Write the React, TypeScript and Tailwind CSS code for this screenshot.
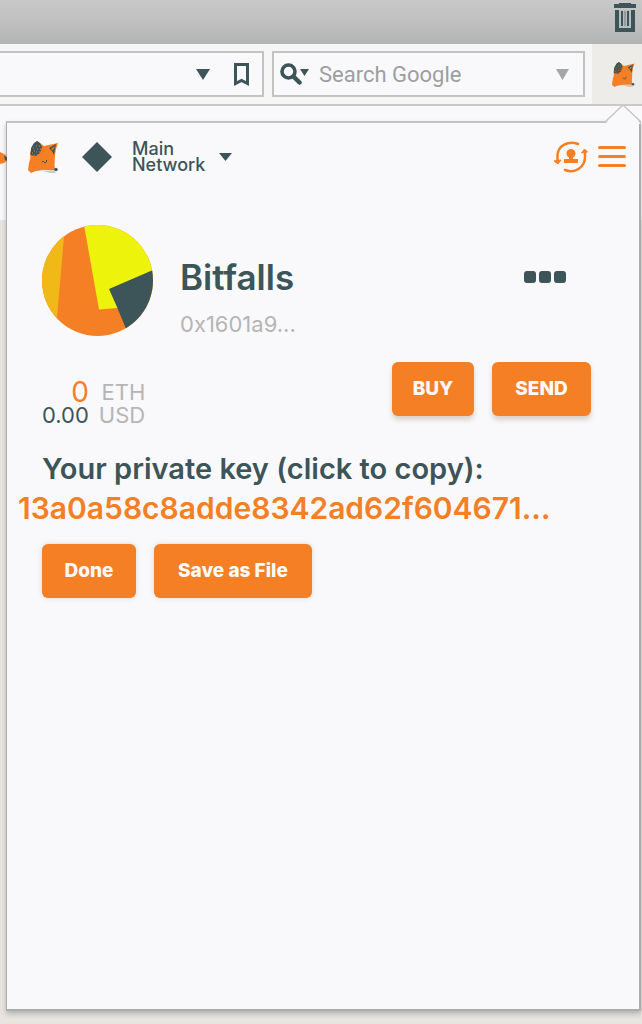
import { useState, type ReactNode } from "react";

function Fox({ className }: { className: string }) {
  return (
    <svg viewBox="0 0 32 32" preserveAspectRatio="none" className={className} aria-hidden="true">
      <path d="M2 12 5 4 9 0 12 2 16 5 30 2 28 8 27 14 26.500 24 27 29 16 29 8 30 3 32 0 29 1 22 2.500 17Z" fill="#f57f25" />
      <path d="M2.500 14 3 7 6 2 9 0 12 2 14 6 12 12 8 15Z" fill="#3d5459" />
      <path
        d="M5 7h1M8 5h1M11 5h1M6 10h1M9 8h1M12 8h1M4 12h1M8 11h1M11 11h1M6 14h1M9 14h1"
        stroke="#f57f25"
        strokeWidth="1"
      />
      <path d="m28 3-7 4 3 3 2 4 1-6Z" fill="#3d5459" />
      <path d="m27 5-4 3 2 1Z" fill="#f57f25" />
      <path d="M14 20h2v1h-2Zm2 1h2v1h-2Zm2-2h1v2h-1Z" fill="#3d5459" />
      <path d="m14 30 12-1 2 3-6 0Z" fill="#cfc9c2" />
      <circle cx="28" cy="28.500" r="1.700" fill="#3d5459" />
    </svg>
  );
}

function Triangle({ className }: { className: string }) {
  return (
    <svg viewBox="0 0 14 10" preserveAspectRatio="none" className={className} aria-hidden="true">
      <path d="M0 0h14L7 10Z" fill="currentColor" />
    </svg>
  );
}

function ActionButton({ children, className, onClick }: { children: ReactNode; className: string; onClick?: () => void }) {
  return (
    <button
      type="button"
      onClick={onClick}
      className={`h-[54px] rounded-md bg-[#f57f25] text-center text-[19px] font-extrabold text-[#fafafc] ${className}`}
    >
      {children}
    </button>
  );
}

function BrowserChrome() {
  return (
    <header>
      <div className="flex h-11 items-start justify-end bg-linear-to-b from-[#c8c8c8] via-[#c0c0c0] to-[#b3b4b4] pt-[3px] pr-[5px]">
        <button type="button" aria-label="Delete">
          <svg viewBox="0 0 24 30" className="h-[30px] w-6" aria-hidden="true">
            <path d="M1 1h5V0h12v1h5v4H1Z" fill="#3d5459" />
            <path d="M2 7h20v22H2Z" fill="#3d5459" />
            <path d="M6 7h12v18H6Z" fill="#b9bdbd" />
            <path d="M8 8v15h2V8Zm6 0v15h2V8Z" fill="#3d5459" />
            <path d="M12 8v15" stroke="#3d5459" strokeWidth=".6" />
          </svg>
        </button>
      </div>
      <div className="flex h-[62px] items-stretch border-b-2 border-[#cbc9c7] bg-[#f7f6f6]">
        <div className="my-[7px] flex flex-1 items-center justify-end border-2 border-l-0 border-[#c3c2c0] bg-[#f9f9fc] pr-[13px] text-[#3d5459]">
          <button type="button" aria-label="Show history" className="mr-6">
            <Triangle className="h-[11px] w-[14px]" />
          </button>
          <button type="button" aria-label="Bookmark">
            <svg viewBox="0 0 15 23" className="h-[23px] w-[15px]" aria-hidden="true">
              <path d="M1.500 1.500h12v19l-6-3-6 3Z" fill="none" stroke="currentColor" strokeWidth="3" />
            </svg>
          </button>
        </div>
        <div className="my-[7px] ml-2 flex w-[313px] items-center border-2 border-[#c3c2c0] bg-[#f9f9fc] pr-[14px] pl-[6px] text-[#3d5459]">
          <svg viewBox="0 0 29 22" className="h-[22px] w-[29px]" aria-hidden="true">
            <circle cx="8.500" cy="8.500" r="6.500" fill="none" stroke="currentColor" strokeWidth="3.600" />
            <path d="m13.500 13.500 6 6" stroke="currentColor" strokeWidth="4.500" strokeLinecap="round" />
            <path d="M20 6h9l-4.500 7Z" fill="currentColor" />
          </svg>
          <input
            type="search"
            aria-label="Search Google"
            placeholder="Search Google"
            className="ml-[10px] min-w-0 flex-1 bg-transparent font-['Roboto',sans-serif] text-[22px] outline-none placeholder:text-[#9c9fa0]"
          />
          <Triangle className="h-[11px] w-[13px] text-[#a4a7a7]" />
        </div>
        <button type="button" aria-label="Wallet" className="ml-[7px] flex w-[50px] items-center justify-end bg-[#eeece9] pr-[6px]">
          <Fox className="h-[25px] w-6" />
        </button>
      </div>
    </header>
  );
}

function WalletHeader() {
  return (
    <div className="flex h-[67px] items-center pr-[13px] pl-[21px]">
      <Fox className="size-8" />
      <button type="button" className="ml-[22px] flex items-center text-[#3d5459]">
        <svg viewBox="0 0 30 30" className="size-[30px]" aria-hidden="true">
          <path d="M15 0 30 15 15 30 0 15Z" fill="currentColor" />
        </svg>
        <span className="ml-5 text-left text-[18px] leading-4 font-medium">
          Main
          <br />
          Network
        </span>
        <Triangle className="ml-[14px] h-2 w-[13px]" />
      </button>
      <button type="button" aria-label="Switch account" className="ml-auto">
        <svg viewBox="0 0 34 32" className="h-8 w-[34px]" fill="none" stroke="#f57f25" strokeWidth="2.500" aria-hidden="true">
          <path d="M24 3C14-1 4 5 3.500 14v6M11 29c10 4 20-3 20-13v-5" strokeLinecap="round" />
          <path d="m0 20 7-1-3 4ZM27.500 12l3-4 3 3Z" fill="#f57f25" strokeWidth="1" />
          <circle cx="17" cy="12.500" r="4.500" fill="#f57f25" stroke="none" />
          <path d="M15 15h4v3h5v4H10v-4h5Z" fill="#f57f25" stroke="none" />
        </svg>
      </button>
      <button type="button" aria-label="Menu" className="ml-[10px] flex w-7 flex-col gap-[6px]">
        <span className="h-[3px] w-full rounded-full bg-[#f57f25]" />
        <span className="h-[3px] w-full rounded-full bg-[#f57f25]" />
        <span className="h-[3px] w-full rounded-full bg-[#f57f25]" />
      </button>
    </div>
  );
}

function Avatar() {
  return (
    <svg viewBox="0 0 111 111" className="size-[111px] shrink-0 rounded-full" aria-hidden="true">
      <path d="M0 0h111v111H0Z" fill="#f57f25" />
      <path d="M0 0h23L15 92 0 111Z" fill="#f1b918" />
      <path d="M42 0h69v80L57 84.500Z" fill="#edf30a" />
      <path d="m67 64 44-19v66H87L75 82Z" fill="#3d5459" />
    </svg>
  );
}

export default function App() {
  const [open, setOpen] = useState(true);
  const privateKey = "13a0a58c8adde8342ad62f604671…";

  return (
    <div className="flex min-h-screen flex-col bg-[#e8e5e1] font-['Inter',sans-serif]">
      <BrowserChrome />
      <main className="flex flex-1 flex-col bg-linear-to-b from-[#f9f9fb] from-[114px] to-[#e8e5e1] to-[114px] pt-[15px] pb-[13px]">
        <section className="relative mr-px ml-[6px] flex-1 border border-t-2 border-r-2 border-b-2 border-[#a9adad] border-t-[#c3c2c0] bg-[#f9f9fb] shadow-[0_3px_5px_rgba(90,90,90,0.35)]">
          <svg viewBox="0 0 36 20" className="absolute -top-[19px] -right-[2px] h-5 w-9" aria-hidden="true">
            <path d="M0 20 18 1l18 19Z" fill="#f9f9fb" />
            <path d="M0 18 18 1l18 17" fill="none" stroke="#c9c7c5" strokeWidth="1.500" />
          </svg>
          <svg viewBox="0 0 7 14" className="absolute top-[28px] -left-[7px] h-[14px] w-[7px]" aria-hidden="true">
            <path d="M0 1 6 4l1 6-3 2-4 1Z" fill="#f57f25" />
            <path d="m4 5 3 1v4l-2-1Z" fill="#3d5459" />
          </svg>
          <WalletHeader />
          <div className="flex pt-[35px] pr-[73px] pl-[35px]">
            <Avatar />
            <div className="ml-[27px] pt-8">
              <h1 className="text-[35px] leading-10 font-semibold text-[#3d5459]">Bitfalls</h1>
              <p className="mt-[11px] text-[22px] leading-8 text-[#b4b5b5]">0x1601a9...</p>
            </div>
            <button type="button" aria-label="Account options" className="mt-[46px] ml-auto flex gap-[3px] self-start">
              <span className="size-3 rounded-[3px] bg-[#3d5459]" />
              <span className="size-3 rounded-[3px] bg-[#3d5459]" />
              <span className="size-3 rounded-[3px] bg-[#3d5459]" />
            </button>
          </div>
          <div className="mt-[22px] flex items-start pr-[48px] pl-[35px]">
            <dl className="mt-[19px] grid grid-cols-[auto_auto] items-center gap-x-[10px] text-right text-[22px] leading-[23px]">
              <dd className="text-[28px] text-[#f57f25]">0</dd>
              <dt className="text-[#b4b5b5]">ETH</dt>
              <dd className="text-[#3d5459]">0.00</dd>
              <dt className="text-[#b4b5b5]">USD</dt>
            </dl>
            <div className="ml-auto flex gap-[18px]">
              <ActionButton className="w-[82px] shadow-[0_4px_5px_rgba(150,120,90,0.3)]">BUY</ActionButton>
              <ActionButton className="w-[99px] shadow-[0_4px_5px_rgba(150,120,90,0.3)]">SEND</ActionButton>
            </div>
          </div>
          {open && (
            <div className="pt-6 pl-[11px]">
              <p className="pl-6 text-[29px] leading-9 font-semibold text-[#3d5459]">Your private key (click to copy):</p>
              <button
                type="button"
                onClick={() => navigator.clipboard?.writeText(privateKey)}
                className="mt-px block text-[30px] leading-10 font-semibold text-[#f57f25]"
              >
                {privateKey}
              </button>
              <div className="mt-4 flex gap-[18px] pl-6">
                <ActionButton className="w-[94px] shadow-[0_0_5px_rgba(150,120,90,0.25)]" onClick={() => setOpen(false)}>
                  Done
                </ActionButton>
                <ActionButton className="w-[158px] shadow-[0_0_5px_rgba(150,120,90,0.25)]">Save as File</ActionButton>
              </div>
            </div>
          )}
        </section>
      </main>
    </div>
  );
}
